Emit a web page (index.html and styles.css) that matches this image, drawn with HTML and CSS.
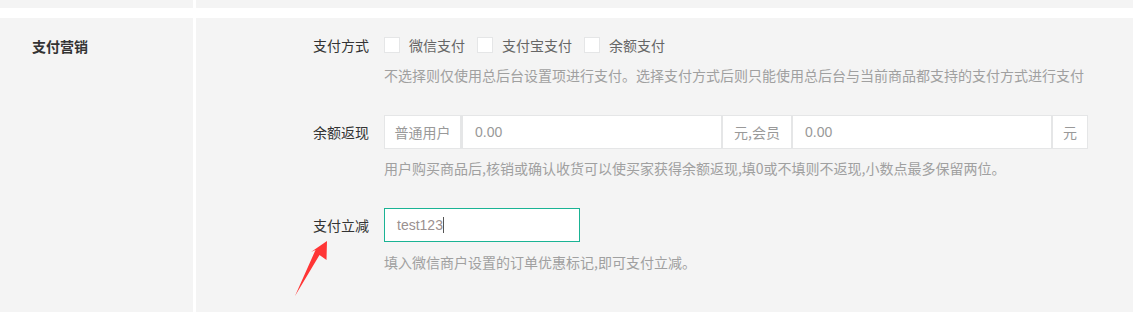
FILE: index.html
```html
<!DOCTYPE html>
<html lang="zh-CN">
<head>
    <meta charset="UTF-8">
    <meta name="viewport" content="width=device-width, initial-scale=1.0">
    <title>支付营销</title>
    <link rel="stylesheet" href="styles.css">
</head>
<body>
    <div class="strip">
        <div class="strip-left"></div>
        <div class="strip-right"></div>
    </div>

    <div class="section">
        <div class="section-title">支付营销</div>

        <div class="section-body">
            <!-- 支付方式 -->
            <div class="form-group">
                <div class="form-row">
                    <label class="control-label">支付方式</label>
                    <div class="controls checks">
                        <label class="check"><span class="box"></span>微信支付</label>
                        <label class="check"><span class="box"></span>支付宝支付</label>
                        <label class="check"><span class="box"></span>余额支付</label>
                    </div>
                </div>
                <div class="help-block">不选择则仅使用总后台设置项进行支付。选择支付方式后则只能使用总后台与当前商品都支持的支付方式进行支付</div>
            </div>

            <!-- 余额返现 -->
            <div class="form-group">
                <div class="form-row">
                    <label class="control-label">余额返现</label>
                    <div class="input-group">
                        <span class="addon addon-first">普通用户</span>
                        <input class="form-control" type="text" placeholder="0.00">
                        <span class="addon addon-mid">元,会员</span>
                        <input class="form-control" type="text" placeholder="0.00">
                        <span class="addon addon-last">元</span>
                    </div>
                </div>
                <div class="help-block help-tight">用户购买商品后,核销或确认收货可以使买家获得余额返现,填0或不填则不返现,小数点最多保留两位。</div>
            </div>

            <!-- 支付立减 -->
            <div class="form-group">
                <div class="form-row">
                    <label class="control-label">支付立减</label>
                    <div class="single-input"><span class="value">test123</span><span class="caret"></span></div>
                </div>
                <div class="help-block">填入微信商户设置的订单优惠标记,即可支付立减。</div>
            </div>

            <svg class="arrow" width="40" height="60" viewBox="290 240 40 60">
                <polygon points="327,241 326.5,260 319.5,255 295,296 315.5,250 311,252" fill="#ff3535"/>
            </svg>
        </div>
    </div>
</body>
</html>
```

FILE: styles.css
```css
body {
    margin: 0;
    background: #fff;
    font-family: "Noto Sans CJK SC", "Liberation Sans", sans-serif;
    font-size: 14px;
    color: #333;
}

.strip {
    display: flex;
    gap: 3px;
    height: 8px;
    margin-bottom: 10px;
}

.strip-left,
.section-title {
    width: 193px;
    background: #f4f4f4;
}

.strip-right {
    flex: 1;
    background: #f4f4f4;
}

.section {
    display: flex;
    gap: 3px;
    height: 294px;
}

.section-title {
    box-sizing: border-box;
    padding: 18px 0 0 32px;
    font-weight: bold;
    line-height: 20px;
    color: #333;
}

.section-body {
    position: relative;
    flex: 1;
    background: #f4f4f4;
    padding-top: 17px;
}

.form-group {
    margin-bottom: 30px;
}

.form-row {
    display: flex;
    align-items: center;
    gap: 15px;
}

.control-label {
    width: 173px;
    text-align: right;
    line-height: 20px;
    color: #333;
}

.checks {
    display: flex;
    align-items: center;
    height: 20px;
}

.check {
    display: flex;
    align-items: center;
    color: #666;
    line-height: 20px;
    margin-right: 12px;
}

.check .box {
    width: 14px;
    height: 14px;
    border: 1px solid #e5e6e7;
    background: #fff;
    margin-right: 9px;
}

.help-block {
    margin: 10px 0 0 188px;
    line-height: 20px;
    color: #a0a0a0;
}

.help-tight {
    margin-top: 9px;
}

.input-group {
    display: flex;
    width: 704px;
    height: 34px;
}

.addon {
    box-sizing: border-box;
    display: flex;
    align-items: center;
    justify-content: center;
    height: 34px;
    background: #fff;
    border: 1px solid #e5e6e7;
    color: #999;
}

.addon-first {
    width: 77px;
}

.addon-mid {
    width: 68px;
    border-left: none;
    border-right: none;
}

.addon-last {
    width: 35px;
    border-left: none;
}

.form-control {
    box-sizing: border-box;
    flex: 1;
    min-width: 0;
    height: 34px;
    border: 1px solid #e5e6e7;
    border-left-width: 2px;
    border-right-width: 2px;
    padding: 0 12px;
    font-family: "Liberation Sans", sans-serif;
    font-size: 14px;
    outline: none;
}

.form-control::placeholder {
    color: #999;
}

.single-input {
    box-sizing: border-box;
    display: flex;
    align-items: center;
    width: 196px;
    height: 34px;
    padding: 0 12px;
    background: #fff;
    border: 1px solid #1ab394;
}

.single-input .value {
    font-family: "Liberation Sans", sans-serif;
    color: #9a9090;
}

.single-input .caret {
    width: 1px;
    height: 16px;
    background: #555;
}

.arrow {
    position: absolute;
    left: 94px;
    top: 222px;
}
```
